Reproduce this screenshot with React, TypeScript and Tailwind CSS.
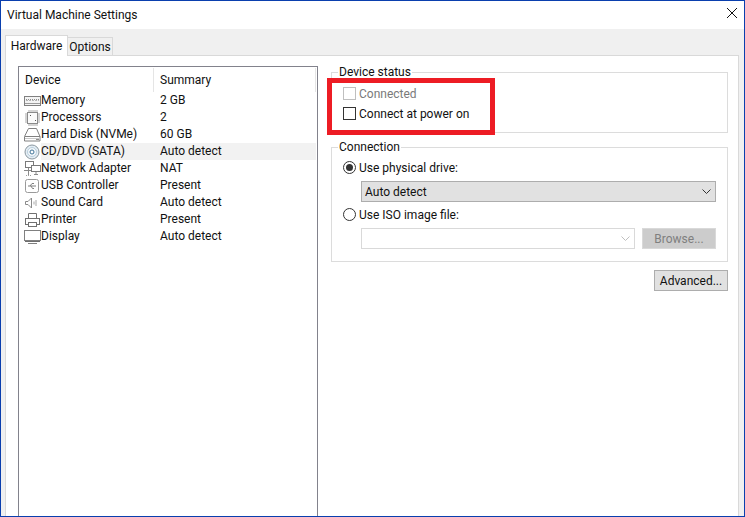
const devices = [
  { name: 'Memory', summary: '2 GB', icon: 'memory' },
  { name: 'Processors', summary: '2', icon: 'cpu' },
  { name: 'Hard Disk (NVMe)', summary: '60 GB', icon: 'disk' },
  { name: 'CD/DVD (SATA)', summary: 'Auto detect', icon: 'cd', selected: true },
  { name: 'Network Adapter', summary: 'NAT', icon: 'net' },
  { name: 'USB Controller', summary: 'Present', icon: 'usb' },
  { name: 'Sound Card', summary: 'Auto detect', icon: 'sound' },
  { name: 'Printer', summary: 'Present', icon: 'printer' },
  { name: 'Display', summary: 'Auto detect', icon: 'display' },
]

function DeviceIcon({ name }: { name: string }) {
  return (
    <svg width="17" height="16" viewBox="0 0 17 16" fill="none" stroke="#707070" strokeWidth="1" className="shrink-0">
      {name === 'memory' && (
        <>
          <rect x="0.5" y="3.5" width="16" height="9" fill="#f4f4f4" stroke="#808080" />
          <path d="M2 6.5h13" stroke="#8c8c8c" strokeDasharray="1 1" />
          <path d="M2 7.5h13" stroke="#b5b5b5" strokeDasharray="2 1" />
          <path d="M1 10.5h15" stroke="#9a9a9a" />
        </>
      )}
      {name === 'cpu' && (
        <>
          <rect x="3.5" y="2.5" width="10" height="11" stroke="#8a8a8a" fill="#fafafa" />
          <path d="M5 0v2M7 0v2M9 0v2M11 0v2M13 0v2M5 14v2M7 14v2M9 14v2M11 14v2M13 14v2M1 4h2M1 6h2M1 8h2M1 10h2M1 12h2M14 4h2M14 6h2M14 8h2M14 10h2M14 12h2" stroke="#a8a8a8" />
          <path d="M6 5h1v1H6zM11 10h1v1h-1z" fill="#555" stroke="none" />
        </>
      )}
      {name === 'disk' && (
        <>
          <path d="M4.5 1.5h8l3.5 8v4.5H0.5V9.5z" stroke="#808080" />
          <path d="M1 9.5h15" stroke="#808080" />
          <path d="M1 11.5h15" stroke="#c8c8c8" />
          <path d="M12 12.5h3" stroke="#909090" />
        </>
      )}
      {name === 'cd' && (
        <>
          <circle cx="8" cy="8" r="7" fill="#e4edf4" stroke="#8a979f" />
          <circle cx="8" cy="8" r="4.5" fill="#f3f7fa" stroke="#b8cedd" />
          <circle cx="8" cy="8" r="2" fill="#fff" stroke="#3f7398" />
        </>
      )}
      {name === 'net' && (
        <>
          <rect x="1.5" y="0.5" width="8" height="6" fill="#fff" stroke="#7a7a7a" />
          <rect x="7.5" y="4.5" width="9" height="6" fill="#fff" stroke="#7a7a7a" />
          <path d="M4.5 7v7M0 9.5h7M10 13.5h4M12 11v2" stroke="#8a8a8a" />
          <path d="M2 14.5h5" stroke="#a0a0a0" strokeDasharray="1 1" />
        </>
      )}
      {name === 'usb' && (
        <>
          <rect x="1.5" y="1.5" width="13" height="13" rx="2" stroke="#9a9a9a" />
          <path d="M4 8h8M6 8l2-2.5h2M7 8l1.5 2.5H10" stroke="#7f7f7f" />
        </>
      )}
      {name === 'sound' && (
        <>
          <path d="M1.5 6.5h2.5l3.5-3.5v10L4 9.5H1.5z" stroke="#8a8a8a" />
          <path d="M10 6.5v3M12 5v6" stroke="#a8a8a8" />
        </>
      )}
      {name === 'printer' && (
        <>
          <path d="M4.5 6V1.5h8V6" />
          <rect x="1.5" y="6.5" width="14" height="6" />
          <rect x="4.5" y="10.5" width="8" height="4" fill="#fff" />
        </>
      )}
      {name === 'display' && (
        <>
          <rect x="0.5" y="1.5" width="16" height="10" stroke="#808080" />
          <path d="M1 12.5h15" stroke="#6e6e6e" />
          <path d="M4 14.5h9" stroke="#808080" />
        </>
      )}
    </svg>
  )
}

function Chevron({ color }: { color: string }) {
  return (
    <svg width="9" height="5" viewBox="0 0 9 5" fill="none" stroke={color}>
      <path d="M0.5 0.5L4.5 4.5L8.5 0.5" />
    </svg>
  )
}

function GroupBox({ label, className, children }: { label: string; className: string; children: React.ReactNode }) {
  return (
    <fieldset className={`border border-[#dcdcdc] ${className}`}>
      <legend className="ml-[6px] px-[1px] h-[14px] leading-[14px]">{label}</legend>
      {children}
    </fieldset>
  )
}

export default function App() {
  return (
    <div className="relative h-[517px] w-[745px] flex flex-col bg-white border border-[#0a3fae] overflow-hidden text-[12px] text-[#111] font-['Roboto',sans-serif]">
      <div className="h-[28px] shrink-0 flex items-center justify-between pl-[6px] pr-[7px]">
        <span>Virtual Machine Settings</span>
        <svg width="10" height="10" viewBox="0 0 10 10" stroke="#111" fill="none" className="mb-[4px]">
          <path d="M0 0L10 10M10 0L0 10" />
        </svg>
      </div>
      <div className="flex-1 flex flex-col bg-[#f0f0f0] pt-[6px] pl-[4px] pr-[5px] min-h-0">
        <div className="flex items-end h-[20px] shrink-0 relative z-10">
          <div className="h-[21px] -mb-[1px] w-[63px] bg-white border border-b-0 border-[#d9d9d9] flex items-center justify-center pb-[1px]">Hardware</div>
          <div className="h-[18px] w-[45px] bg-[#f0f0f0] border border-l-0 border-b-0 border-[#d9d9d9] flex items-center justify-center">Options</div>
        </div>
        <div className="flex-1 bg-white border border-b-0 border-[#d9d9d9] flex gap-[13px] pl-[12px] pt-[9px] pr-[10px] min-h-0">
          <div className="w-[300px] border border-b-0 border-[#82828c] shrink-0 pt-[1px] mt-[1px]">
            <div className="flex h-[24px] items-center">
              <div className="w-[135px] pl-[6px] h-full flex items-center border-r border-[#e5e5e5]">Device</div>
              <div className="flex-1 pl-[6px] h-full flex items-center border-r border-[#e5e5e5] mr-[1px]">Summary</div>
            </div>
            {devices.map((d) => (
              <div key={d.name} className="flex h-[17px] items-center">
                <div className="w-[136px] pl-[5px] flex items-center shrink-0">
                  <DeviceIcon name={d.icon} />
                  <span className={`flex-1 leading-[17px] ${d.selected ? 'bg-[#f2f2f2]' : ''}`}>{d.name}</span>
                </div>
                <div className={`flex-1 pl-[5px] mr-[1px] leading-[17px] ${d.selected ? 'bg-[#f2f2f2]' : ''}`}>{d.summary}</div>
              </div>
            ))}
          </div>
          <div className="flex-1 flex flex-col">
            <GroupBox label="Device status" className="h-[68px] shrink-0">
              <div className="pl-[11px] pt-[5px] flex flex-col gap-[1px]">
                <div className="flex items-center h-[19px] text-[#7a7a7a]">
                  <span className="w-[13px] h-[13px] shrink-0 border border-[#bfbfbf] mr-[3px]" />
                  Connected
                </div>
                <div className="flex items-center h-[19px]">
                  <span className="w-[13px] h-[13px] shrink-0 border border-[#333] mr-[3px]" />
                  Connect at power on
                </div>
              </div>
            </GroupBox>
            <GroupBox label="Connection" className="mt-[7px] h-[122px] shrink-0">
              <div className="px-[11px]">
                <div className="flex items-center h-[19px] mt-[4px]">
                  <span className="w-[13px] h-[13px] shrink-0 rounded-full border border-[#333] mr-[3px] flex items-center justify-center">
                    <span className="w-[7px] h-[7px] rounded-full bg-[#333]" />
                  </span>
                  Use physical drive:
                </div>
                <div className="ml-[18px] mt-[4px] h-[21px] bg-[#e1e1e1] border border-[#adadad] flex items-center justify-between pl-[3px] pr-[4px]">
                  <span>Auto detect</span>
                  <Chevron color="#333" />
                </div>
                <div className="flex items-center h-[19px] mt-[3px]">
                  <span className="w-[13px] h-[13px] shrink-0 rounded-full border border-[#333] mr-[3px]" />
                  Use ISO image file:
                </div>
                <div className="flex ml-[18px] mt-[4px] gap-[7px]">
                  <div className="w-[274px] h-[21px] border border-[#d9d9d9] flex items-center justify-end pr-[4px]">
                    <Chevron color="#bfbfbf" />
                  </div>
                  <div className="flex-1 h-[21px] bg-[#cccccc] border border-[#d9d9d9] text-[#7f7f7f] flex items-center justify-center">Browse...</div>
                </div>
              </div>
            </GroupBox>
            <div className="flex justify-end mt-[8px]">
              <div className="w-[74px] h-[21px] bg-[#e1e1e1] border border-[#adadad] flex items-center justify-center">Advanced...</div>
            </div>
          </div>
        </div>
      </div>
      <div className="absolute left-[326px] top-[77px] w-[168px] h-[57px] border-[5px] border-[#ed1c24] pointer-events-none" />
    </div>
  )
}
